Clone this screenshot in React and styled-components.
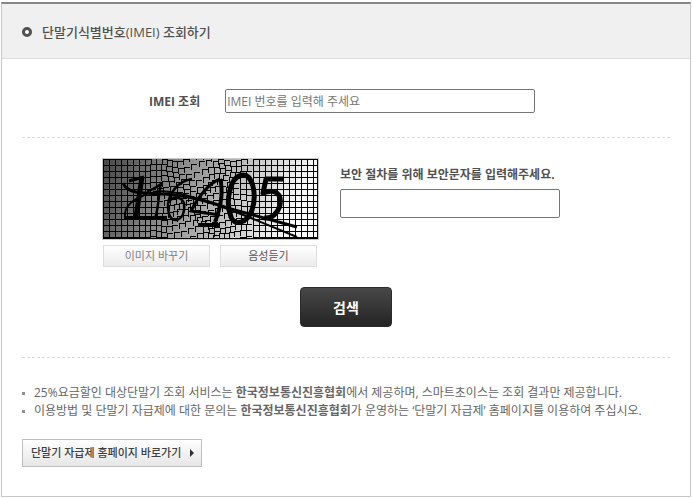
import React from "react";
import styled, { createGlobalStyle } from "styled-components";

const GlobalStyle = createGlobalStyle`
  * { box-sizing: border-box; }
  body {
    margin: 0;
    background: #fff;
    color: #666;
    font-family: "Open Sans", "Noto Sans CJK KR", sans-serif;
    font-size: 12px;
    line-height: 18px;
  }
  button, input { font-family: inherit; }
`;

const Panel = styled.main`
  margin: 2px 2px 0 1px;
  border: 1px solid #c8c8c8;
  border-top: 2px solid #868686;
`;

const Header = styled.header`
  display: flex;
  align-items: center;
  gap: 10px;
  height: 55px;
  padding: 2px 20px 0;
  background: #f0f0f0;
  border-bottom: 1px solid #dcdcdc;
`;

const Ring = styled.span`
  width: 10px;
  height: 10px;
  border: 3px solid #505050;
  border-radius: 50%;
  background: #fff;
`;

const Title = styled.h1`
  margin: 0;
  color: #505050;
  font-size: 13px;
  font-weight: 500;
  line-height: 20px;
`;

const Content = styled.div`
  padding: 0 20px 29px;
`;

const ImeiRow = styled.div`
  display: flex;
  align-items: center;
  gap: 25px;
  padding: 30px 0 24px 127px;
  border-bottom: 1px dashed #dcdcdc;
`;

const Label = styled.label`
  padding-top: 2px;
  color: #505050;
  font-weight: 700;
  white-space: nowrap;
`;

const TextField = styled.input`
  width: ${(p) => p.$width}px;
  max-width: 100%;
  height: ${(p) => p.$height}px;
  padding: 1px;
  border: 1px solid #767676;
  border-radius: 2px;
  background: #fff;
  color: #333;
  font-size: 12px;
  &::placeholder { color: #757575; opacity: 1; }
`;

const CaptchaForm = styled.div`
  padding: 20px 0 30px;
  border-bottom: 1px dashed #dcdcdc;
`;

const CaptchaRow = styled.div`
  display: flex;
  gap: 21px;
  padding-left: 80px;
`;

const CaptchaPicture = styled.div`
  display: flex;
  flex-direction: column;
  gap: 5px;
  svg { display: block; border: 1px solid #c8c8c8; }
`;

const ButtonPair = styled.div`
  display: flex;
  gap: 10px;
  padding-left: 1px;
`;

const SmallButton = styled.button`
  width: ${(p) => p.$width}px;
  height: 22px;
  padding: 0;
  border: 1px solid #dedede;
  background: linear-gradient(#fff, #ececec);
  color: ${(p) => (p.$strong ? "#555" : "#808080")};
  font-size: 11px;
  line-height: 18px;
`;

const CaptchaAnswer = styled.div`
  display: flex;
  flex-direction: column;
  align-items: flex-start;
  gap: 5px;
  padding-top: 6px;
`;

const SearchButton = styled.button`
  display: block;
  width: 92px;
  height: 40px;
  margin: 20px auto 0;
  padding: 0;
  border: 1px solid #2b2b2b;
  border-radius: 4px;
  background: linear-gradient(#484848, #242424);
  color: #fff;
  font-size: 14px;
  font-weight: 700;
`;

const Notes = styled.ul`
  margin: 0;
  padding: 26px 0 19px;
  list-style: none;
`;

const Note = styled.li`
  display: flex;
  align-items: center;
  gap: 9px;
  &::before {
    content: "";
    flex: none;
    width: 3px;
    height: 3px;
    background: #909090;
  }
`;

const HomeLink = styled.a`
  display: inline-flex;
  align-items: center;
  justify-content: space-between;
  gap: 6px;
  min-width: 180px;
  height: 28px;
  padding: 0 7px 0 8px;
  border: 1px solid #bebebe;
  background: linear-gradient(#fff, #e6e6e6);
  color: #404040;
  font-size: 11px;
  font-weight: 500;
  text-decoration: none;
`;

const W = 215;
const H = 80;
const CELL = 6;

// Pulls the grid out of shape around the middle of the picture.
function bend(x, y) {
  const d = Math.max(0, 1 - Math.abs(x - 96) / 52);
  return [
    Math.floor(x + d * 5 * Math.sin(y / 9 + x / 17)),
    Math.floor(y + d * 5 * Math.sin(x / 9 - y / 13)),
  ];
}

// Each cell keeps its own two edges, so neighbours come apart where the grid bends.
function gridPath() {
  const parts = [];
  for (let x = 0; x < W; x += CELL) {
    for (let y = 0; y < H; y += CELL) {
      const [bx, by] = bend(x, y);
      const across = Math.min(CELL, W - bx);
      const down = Math.min(CELL, H - by);
      parts.push(`M${bx} ${by + 0.5}h${across}M${bx + 0.5} ${by}v${down}`);
    }
  }
  return parts.join("");
}

const GRID = gridPath();

function CaptchaImage() {
  return (
    <svg width={W + 2} height={H + 2} viewBox={`0 0 ${W} ${H}`} role="img" aria-label="보안문자">
      <defs>
        <linearGradient id="shade" x1="0" x2="1" y1="0" y2="0.15">
          <stop offset="0" stopColor="#484848" />
          <stop offset="0.5" stopColor="#a2a2a2" />
          <stop offset="1" stopColor="#fff" />
        </linearGradient>
      </defs>
      <rect width={W} height={H} fill="url(#shade)" />
      <g fill="none" stroke="#000" strokeWidth="1" shapeRendering="crispEdges">
        <path d={GRID} />
        <path d="M0 79.5H215M214.5 0V80" />
      </g>
      <g fill="none" stroke="#000" strokeLinejoin="round">
        <path strokeWidth="3" d="M26 22L41 18" />
        <path strokeWidth="5" d="M39 18L33 58" />
        <path strokeWidth="4" d="M21 59H64" />
        <path strokeWidth="2" d="M22 58C21 47 29 41 44 35" />
        <path strokeWidth="3" d="M20 24C24 34 35 34 62 35C86 37 104 42 128 50L194 68" />
        <path strokeWidth="2" d="M50 33C66 30 86 37 107 43L148 59L194 78" />
        <path strokeWidth="2.5" d="M44 32C50 31 54 28 58 25C55 37 56 48 52 59" />
        <path strokeWidth="2.5" d="M89 20C76 22 66 33 65 46C65 57 68 61 73 61C80 60 82 52 81 44C78 37 69 37 65 44" />
        <path strokeWidth="3" d="M117 20C106 24 95 38 88 52L117 56" />
        <path strokeWidth="4" d="M117 20C121 34 117 50 112 63M95 66H117" />
        <path strokeWidth="5" d="M139 16C127 18 122 42 128 58C131 67 144 65 149 51C154 36 150 15 139 16Z" />
        <path strokeWidth="5" d="M181 20H163L160 34C172 29 179 35 177 46C175 54 169 60 161 59" />
      </g>
    </svg>
  );
}

export default function App() {
  return (
    <>
      <GlobalStyle />
      <Panel>
        <Header>
          <Ring />
          <Title>단말기식별번호(IMEI) 조회하기</Title>
        </Header>
        <Content>
          <ImeiRow>
            <Label htmlFor="imei">IMEI 조회</Label>
            <TextField id="imei" type="text" $width={310} $height={24} placeholder="IMEI 번호를 입력해 주세요" />
          </ImeiRow>
          <CaptchaForm>
            <CaptchaRow>
              <CaptchaPicture>
                <CaptchaImage />
                <ButtonPair>
                  <SmallButton type="button" $width={107}>이미지 바꾸기</SmallButton>
                  <SmallButton type="button" $width={97} $strong>음성듣기</SmallButton>
                </ButtonPair>
              </CaptchaPicture>
              <CaptchaAnswer>
                <Label htmlFor="answer">보안 절차를 위해 보안문자를 입력해주세요.</Label>
                <TextField id="answer" type="text" $width={220} $height={29} />
              </CaptchaAnswer>
            </CaptchaRow>
            <SearchButton type="button">검색</SearchButton>
          </CaptchaForm>
          <Notes>
            <Note>
              <span>25%요금할인 대상단말기 조회 서비스는 <b>한국정보통신진흥협회</b>에서 제공하며, 스마트초이스는 조회 결과만 제공합니다.</span>
            </Note>
            <Note>
              <span>이용방법 및 단말기 자급제에 대한 문의는 <b>한국정보통신진흥협회</b>가 운영하는 ‘단말기 자급제’ 홈페이지를 이용하여 주십시오.</span>
            </Note>
          </Notes>
          <HomeLink href="#home">
            단말기 자급제 홈페이지 바로가기
            <svg width="4" height="8" viewBox="0 0 4 8" aria-hidden="true">
              <path d="M0 0L4 4L0 8Z" fill="#303030" />
            </svg>
          </HomeLink>
        </Content>
      </Panel>
    </>
  );
}
